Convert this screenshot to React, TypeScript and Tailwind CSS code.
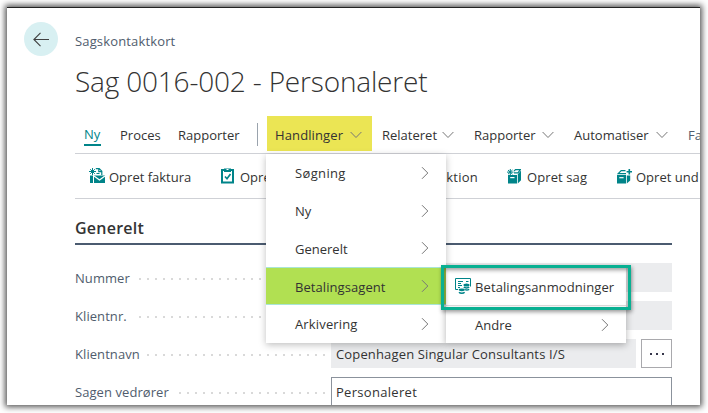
import type { ReactNode } from "react";

const TEAL = "#008489";

function ChevronDown({ className = "" }: { className?: string }) {
  return (
    <svg className={className} width="12" height="8" viewBox="0 0 12 8" fill="none" stroke="currentColor" strokeWidth="1">
      <path d="M.6 1 6 6.5 11.4 1" />
    </svg>
  );
}

function ChevronRight() {
  return (
    <svg className="text-[#777]" width="8" height="14" viewBox="0 0 8 14" fill="none" stroke="currentColor" strokeWidth="1">
      <path d="M1 1.2 6.8 7 1 12.8" />
    </svg>
  );
}

function InvoiceIcon() {
  return (
    <svg width="16" height="16" viewBox="0 0 16 16" fill="none" stroke={TEAL}>
      <path d="M3.5 0v7M0 3.5h7M1.2 1.2l4.6 4.6M5.8 1.2 1.2 5.8" strokeWidth="1" />
      <path d="M6.8 .6h3.4l2.6 2.6V7M9.8 .8v2.8h3M7.5 5.5h3" strokeWidth="1.2" />
      <path d="M1 7.5h3V15H1z" fill={TEAL} stroke="none" />
      <path d="M5 7.5h11V15H5z" fill={TEAL} stroke="none" />
      <path d="m5 8 5.5 4L16 8" stroke="#fff" strokeWidth="1.2" />
    </svg>
  );
}

function TaskIcon() {
  return (
    <svg width="13" height="16" viewBox="0 0 13 16" fill="none" stroke={TEAL}>
      <path d="M1 2h11v12.5H1z" strokeWidth="2" />
      <path d="M3 .5h7V4H3z" fill={TEAL} stroke="none" />
      <path d="M5.5 1.5h2" stroke="#fff" />
      <path d="m4 8.5 2 2.2L9.5 6" strokeWidth="1.7" />
    </svg>
  );
}

function JobIcon() {
  return (
    <svg width="14" height="15" viewBox="0 0 14 15" fill="none" stroke={TEAL}>
      <path d="M3.3 0v6.2M0 3.1h6.5M1 1l4.5 4.2M5.5 1 1 5.2" strokeWidth="1" />
      <path d="M7 2.2 8.5.7h4.8L11 3.8H7" strokeWidth="1.2" />
      <path d="M1 6h9v8.5H1zM10.8 5.2 14 1.6v9.6l-3.2 3.3z" fill={TEAL} stroke="none" />
      <path d="M3.2 8.6h4.3" stroke="#fff" strokeWidth="1.2" />
    </svg>
  );
}

function SubJobIcon() {
  return (
    <svg width="15" height="15" viewBox="0 0 15 15" fill="none" stroke={TEAL}>
      <path d="M12.3 0v5.4M9.6 2.7H15" strokeWidth="1.6" />
      <path d="M8.5 1.7H4.2L1.2 4.7H9" strokeWidth="1.2" />
      <path d="M0 6h9v8.5H0zM9.8 6.6h3.4v4.8l-3.4 3.1z" fill={TEAL} stroke="none" />
      <path d="M2.3 8.7h4.3" stroke="#fff" strokeWidth="1.2" />
    </svg>
  );
}

function PaymentIcon() {
  return (
    <svg width="16" height="16" viewBox="0 0 16 16" fill="none" stroke={TEAL}>
      <path d="M3 11.5H.5V.5h15v8" strokeWidth="1" />
      <path d="M3 3.5h5M3 5.5h3M3 7.5h4M3 9.5h2M11 3.5h2.5" strokeWidth="1" />
      <ellipse cx="11.5" cy="7" rx="3" ry="1.5" fill={TEAL} stroke="none" />
      <path d="M8.8 9.2c1.2.9 4.2.9 5.4 0M10 11.6c1.2.5 3 .4 4.2-.3" strokeWidth="1.5" />
      <ellipse cx="6.8" cy="11.8" rx="3.1" ry="1.4" fill={TEAL} stroke="none" />
      <path d="M4 14.2c1.2 1.3 4.4 1.3 5.6 0" strokeWidth="1.5" />
    </svg>
  );
}

function Tab({ label, className }: { label: string; className: string }) {
  return (
    <div className={`flex h-full shrink-0 items-center justify-between ${className}`}>
      <span className="pt-[4px]">{label}</span>
      <ChevronDown className="mt-[2px] shrink-0 text-[#777]" />
    </div>
  );
}

function Action({ icon, label, className }: { icon: ReactNode; label: string; className: string }) {
  return (
    <div className={`flex shrink-0 items-center ${className}`}>
      {icon}
      <span className="pt-[3px]">{label}</span>
    </div>
  );
}

function MenuItem({ label, className = "" }: { label: string; className?: string }) {
  return (
    <div className={`flex h-[38px] items-center justify-between pr-[17px] pl-[29px] ${className}`}>
      <span className="pt-[2px]">{label}</span>
      <ChevronRight />
    </div>
  );
}

function Field({ label, dots, children }: { label: string; dots: string; children: ReactNode }) {
  return (
    <div className="flex h-[29px] shrink-0 items-center">
      <div className="flex w-[250px] shrink-0 items-center justify-between text-[#505c6d]">
        <span className="pt-[2px] tracking-[0.07px]">{label}</span>
        <span
          className={`mt-[2px] h-[2px] bg-[linear-gradient(90deg,#d9d9d9_2px,transparent_2px)] bg-[length:8px_2px] ${dots}`}
        />
      </div>
      <div className="ml-[6px] flex h-full w-[341px] shrink-0 justify-between">{children}</div>
    </div>
  );
}

export default function App() {
  return (
    <div className="h-[413px] w-[708px] overflow-hidden bg-white p-[7px] font-['Open_Sans','Noto_Sans',sans-serif] text-[13px] whitespace-nowrap text-[#333]">
      <div className="relative h-[398px] w-[693px] shadow-[0_0_6px_2px_rgba(0,0,0,0.68)]">
        <div className="flex h-full w-full flex-col overflow-hidden border-t border-[#222] bg-white">
          <header className="flex h-[106px] shrink-0 pt-[14px] pl-[17px]">
            <div className="flex size-[34px] items-center justify-center rounded-full bg-[#d8f0f2]">
              <svg width="16" height="15" viewBox="0 0 16 15" fill="none" stroke="#404040" strokeWidth="1.1">
                <path d="M16 7.5H1M7.5.8.9 7.5l6.6 6.7" />
              </svg>
            </div>
            <div className="ml-[17px] flex flex-col">
              <span className="mt-[9px] leading-[20px] tracking-[0.15px] text-[#505c6d]">Sagskontaktkort</span>
              <h1 className="mt-[9px] text-[28px] leading-[42px] font-light tracking-[-0.18px]">Sag 0016-002 - Personaleret</h1>
            </div>
          </header>

          <nav className="ml-[68px] flex h-[40px] shrink-0 items-center border-b border-[#cfd1d6] pl-[9px]">
            <span className="mt-[2px] flex h-[22px] w-[17px] shrink-0 items-center border-b-2 border-[#008489] pt-[3px] text-[#008489]">Ny</span>
            <span className="ml-[19px] w-[40px] shrink-0 pt-[4px]">Proces</span>
            <span className="ml-[18px] w-[62px] shrink-0 pt-[4px]">Rapporter</span>
            <span className="ml-[17px] mt-[2px] h-[23px] w-px shrink-0 bg-[#9aa3ad]" />
            <div className="ml-[9px] flex h-[35px] shrink-0 items-center">
              <Tab label="Handlinger" className="w-[105px] bg-[#ebe554] pr-[10px] pl-[8px] tracking-[0.12px]" />
            </div>
            <Tab label="Relateret" className="ml-[10px] w-[72px]" />
            <Tab label="Rapporter" className="ml-[20px] w-[80px]" />
            <Tab label="Automatiser" className="ml-[20px] w-[94px]" />
            <span className="ml-[20px] pt-[4px] text-[#505c6d]">Fa</span>
          </nav>

          <div className="ml-[68px] flex h-[45px] shrink-0 items-center border-b border-[#cfd1d6] pl-[14px]">
            <Action icon={<InvoiceIcon />} label="Opret faktura" className="w-[132px] gap-[4px]" />
            <Action icon={<TaskIcon />} label="Opret" className="w-[157px] gap-[6px]" />
            <span className="w-[100px] shrink-0 pt-[3px] text-right tracking-[0.25px]">aktion</span>
            <Action icon={<JobIcon />} label="Opret sag" className="ml-[29px] w-[110px] gap-[6px] tracking-[0.1px]" />
            <Action icon={<SubJobIcon />} label="Opret und" className="gap-[4px]" />
          </div>

          <section className="ml-[68px] flex shrink-0 flex-col">
            <h2 className="flex h-[46px] w-[597px] items-end border-b-2 border-[#4b5b70] pb-[3px] text-[16px] leading-[24px] font-semibold tracking-[0.25px]">
              Generelt
            </h2>
            <div className="flex flex-col gap-[9px] pt-[18px]">
              <Field label="Nummer" dots="w-[186px]">
                <div className="w-full bg-[#ebecee]" />
              </Field>
              <Field label="Klientnr." dots="w-[186px]">
                <div className="w-full bg-[#ebecee]" />
              </Field>
              <Field label="Klientnavn" dots="w-[178px]">
                <div className="flex w-[305px] items-center bg-[#ebecee] pt-[2px] pl-[5px] tracking-[0.15px]">
                  Copenhagen Singular Consultants I/S
                </div>
                <div className="flex w-[31px] items-center justify-center gap-[4px] border border-[#a9a9ad]">
                  <i className="size-[2px] bg-[#36364a]" />
                  <i className="size-[2px] bg-[#36364a]" />
                  <i className="size-[2px] bg-[#36364a]" />
                </div>
              </Field>
              <Field label="Sagen vedrører" dots="w-[146px]">
                <div className="flex w-full items-center border border-[#8b929c] pt-[2px] pl-[4px] tracking-[0.3px]">
                  Personaleret
                </div>
              </Field>
            </div>
          </section>
        </div>

        <div className="absolute top-[147px] left-[259px] flex h-[189px] w-[180px] flex-col bg-white shadow-[0_2px_7px_rgba(0,0,0,0.25)]">
          <MenuItem label="Søgning" className="tracking-[0.35px]" />
          <MenuItem label="Ny" />
          <MenuItem label="Generelt" />
          <MenuItem label="Betalingsagent" className="border-y border-[#a9e5d6] bg-[#b1e052] tracking-[0.07px]" />
          <MenuItem label="Arkivering" className="tracking-[0.15px]" />
        </div>

        <div className="absolute top-[260px] left-[439px] flex h-[76px] w-[180px] flex-col bg-white shadow-[0_2px_7px_rgba(0,0,0,0.3)]">
          <div className="flex h-[39px] shrink-0 items-center gap-[4px] border-b border-[#ddd] pl-[9px]">
            <PaymentIcon />
            <span className="pt-[3px] tracking-[0.1px]">Betalingsanmodninger</span>
          </div>
          <MenuItem label="Andre" />
        </div>
        <div className="absolute top-[258px] left-[434px] h-[45px] w-[190px] border-3 border-[#09b092] shadow-[1px_2px_4px_rgba(0,0,0,0.4),inset_1px_2px_4px_rgba(0,0,0,0.4)]" />
      </div>
    </div>
  );
}
